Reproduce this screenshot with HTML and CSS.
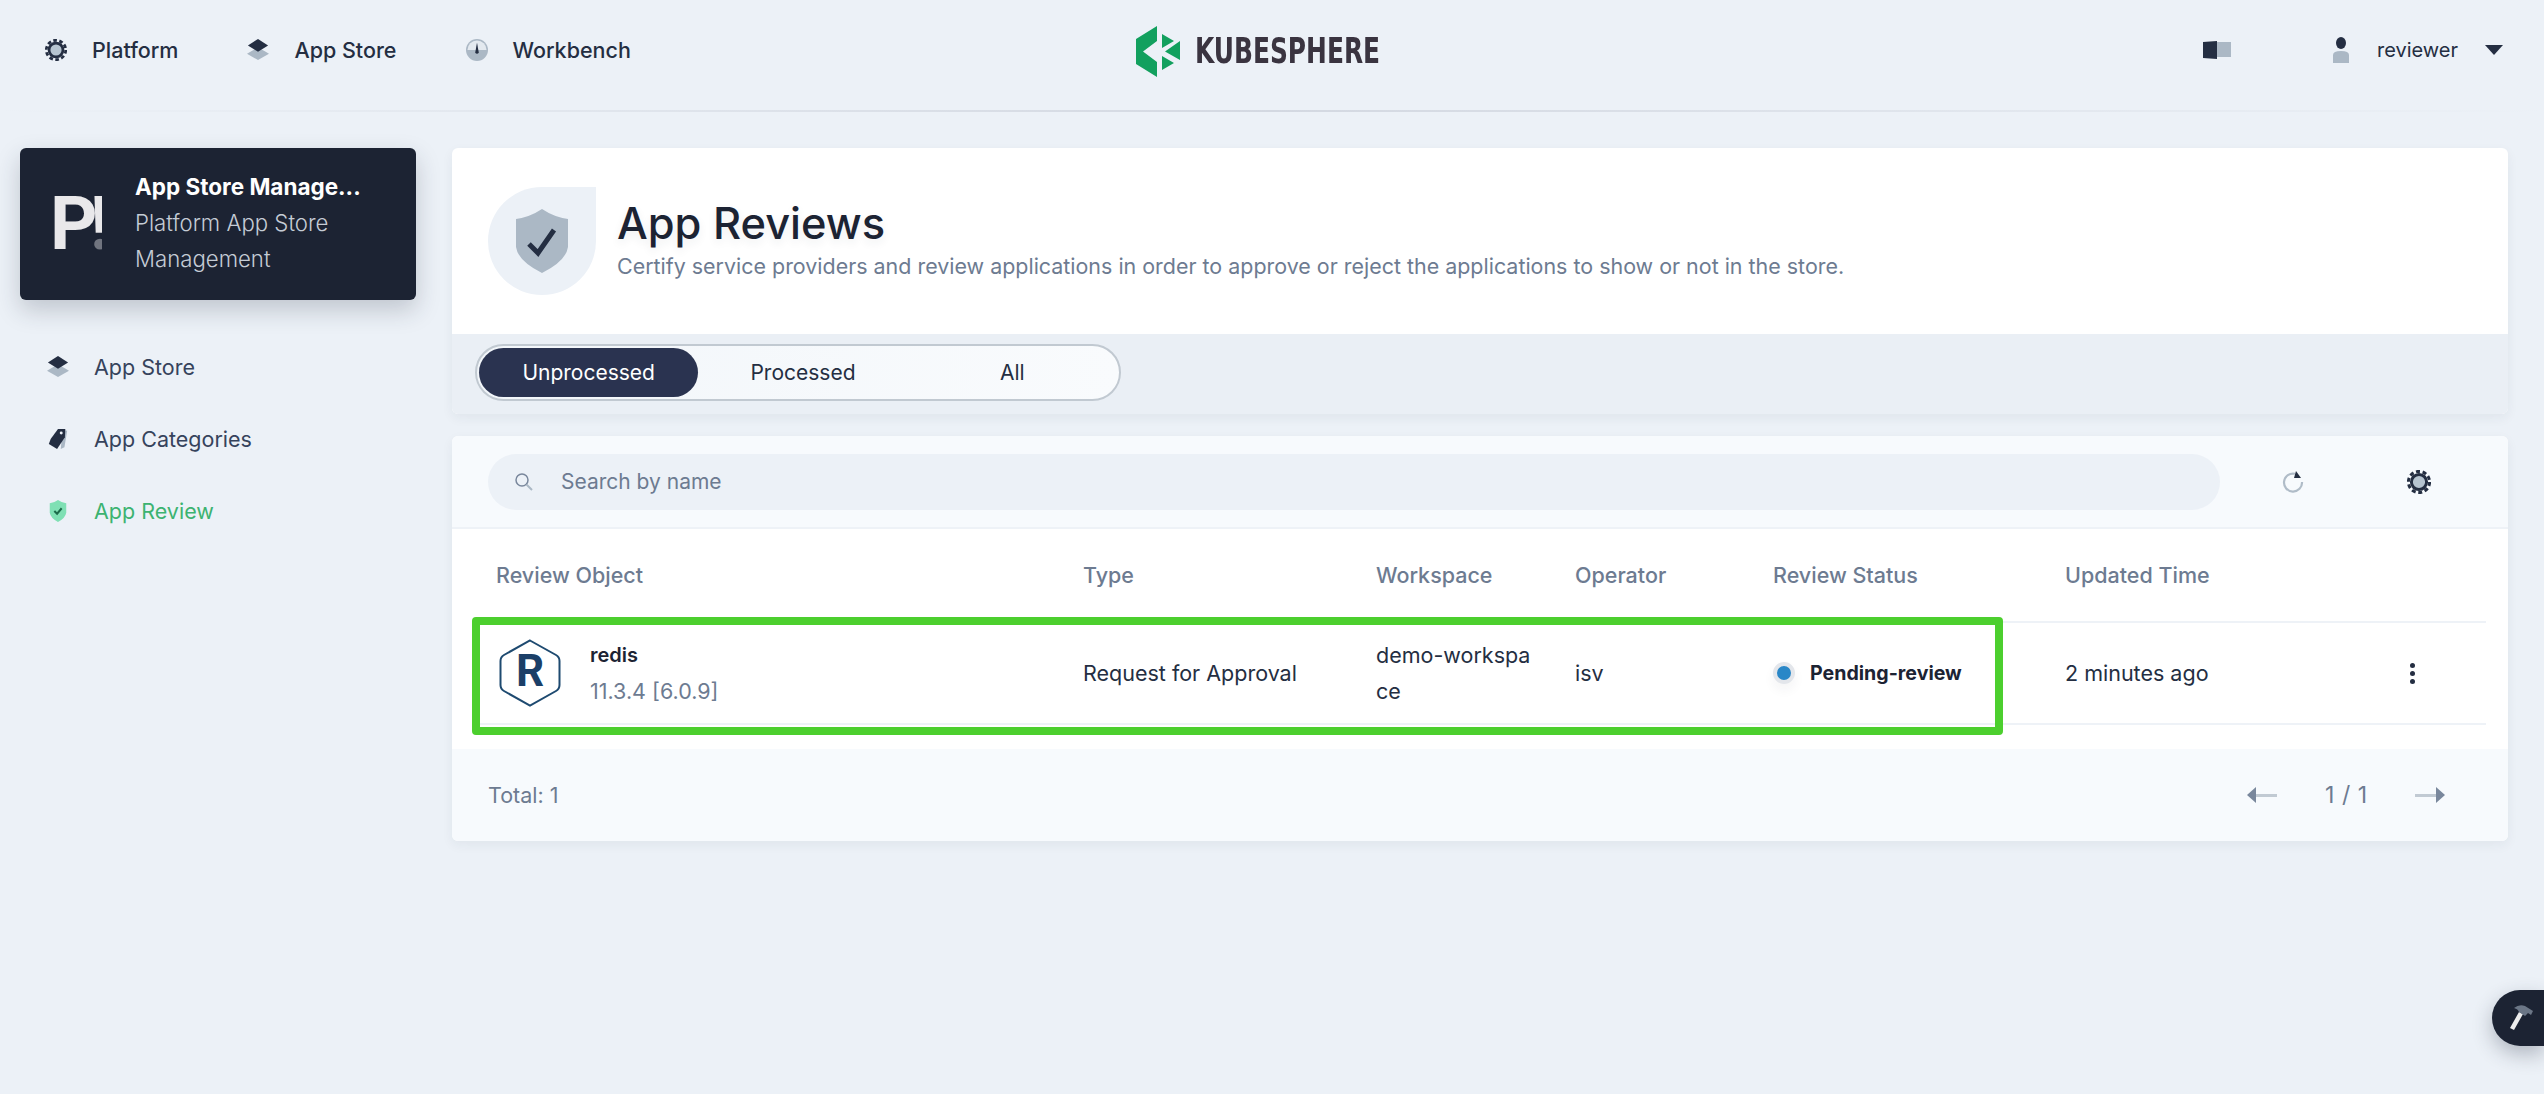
FILE: index.html
```html
<!DOCTYPE html>
<html lang="en">
<head>
<meta charset="UTF-8">
<title>App Reviews - KubeSphere</title>
<link rel="stylesheet" href="styles.css">
</head>
<body>

<header class="topbar">
    <nav class="topnav">
        <a class="topnav-item">
            <svg class="icon-22" viewBox="0 0 24 24"><circle cx="12" cy="12" r="10.6" fill="none" stroke="#242e42" stroke-width="3" stroke-dasharray="4 2.66"/><circle cx="12" cy="12" r="7.6" fill="#b6c4d0" stroke="#242e42" stroke-width="3"/></svg>
            <span>Platform</span>
        </a>
        <a class="topnav-item">
            <svg class="icon-22" viewBox="0 0 24 24"><path d="M12 11 24 18 12 25 0 18Z" transform="translate(0 -2)" fill="#abb8c5"/><path d="M12 0 23 7 12 14 1 7Z" fill="#242e42"/></svg>
            <span>App Store</span>
        </a>
        <a class="topnav-item">
            <svg class="icon-22" viewBox="0 0 24 24"><circle cx="12" cy="12" r="12" fill="#abb8c5"/><path d="M1.600 12a10.400 10.400 0 0 1 20.800 0Z" fill="#e3e9ef"/><path d="M12 4 14 15Q12 17 10 15Z" fill="#242e42"/></svg>
            <span>Workbench</span>
        </a>
    </nav>
    <div class="logo">
        <svg width="44" height="51" viewBox="0 0 44 51"><path d="M21 0V15L7 25.5 21 36V51L0 38V13Z" fill="#12a05e"/><path d="M26 8 38 15 26 22Z M44 15V34L29 25.500Z M26 30 38 37 26 44Z" fill="#12a05e"/></svg>
        <span class="logo-text">KUBESPHERE</span>
    </div>
    <div class="topbar-right">
        <svg class="book" width="28" height="18" viewBox="0 0 28 18"><path d="M14 1H28V16H14Z" fill="#abb8c5"/><path d="M0 1 14 0V18L0 17Z" fill="#242e42"/></svg>
        <div class="user">
            <svg width="18" height="26" viewBox="0 0 18 26"><ellipse cx="9" cy="6" rx="5" ry="6" fill="#242e42"/><path d="M1 26V18Q1 14 9 14T17 18V26Z" fill="#abb8c5"/></svg>
            <span>reviewer</span>
            <i class="caret"></i>
        </div>
    </div>
</header>

<div class="layout">
    <aside class="sidebar">
        <div class="side-card">
            <div class="side-logo">P<span class="bang">!</span></div>
            <div class="side-info">
                <div class="side-title">App Store Manage...</div>
                <div class="side-desc">Platform App Store Management</div>
            </div>
        </div>
        <ul class="side-menu">
            <li>
                <svg class="icon-22" viewBox="0 0 24 24"><path d="M12 11 24 18 12 25 0 18Z" transform="translate(0 -2)" fill="#abb8c5"/><path d="M12 0 23 7 12 14 1 7Z" fill="#242e42"/></svg>
                App Store
            </li>
            <li>
                <svg class="icon-22" viewBox="0 0 24 24"><path d="M17 2 22 3 19 21 15 23Z" fill="#abb8c5"/><path d="M12 1 20 1 19.500 10 11 23 2 17.500 4 12Z" fill="#242e42"/><circle cx="15.500" cy="5.500" r="1.600" fill="#edf1f7"/></svg>
                App Categories
            </li>
            <li class="active">
                <svg class="icon-22" viewBox="0 0 24 24"><path d="M12 0Q16 3 21 3.500V14Q20 20 12 24 4 20 3 14V3.500Q8 3 12 0Z" fill="#7fe0b4"/><path d="M8 12 11 15 16 9" fill="none" stroke="#1c6b4a" stroke-width="2.200"/></svg>
                App Review
            </li>
        </ul>
    </aside>

    <main class="content">
        <section class="banner">
            <div class="banner-head">
                <div class="banner-icon">
                    <svg width="52" height="64" viewBox="0 0 52 64"><path d="M26 0Q38 8 52 10V38Q50 52 26 64 2 52 0 38V10Q14 8 26 0Z" fill="#abb8c5"/><path d="M13 35 22 44 38 21" fill="none" stroke="#242e42" stroke-width="5"/></svg>
                </div>
                <div class="banner-text">
                    <h1>App Reviews</h1>
                    <p>Certify service providers and review applications in order to approve or reject the applications to show or not in the store.</p>
                </div>
            </div>
            <div class="banner-tabs">
                <div class="tabs">
                    <span class="tab tab-active">Unprocessed</span>
                    <span class="tab">Processed</span>
                    <span class="tab">All</span>
                </div>
            </div>
        </section>

        <section class="panel">
            <div class="toolbar">
                <div class="search">
                    <svg width="22" height="22" viewBox="0 0 22 22"><circle cx="9" cy="9" r="6" fill="none" stroke="#79879c" stroke-width="1.500"/><path d="M13.500 13.500 19 19" stroke="#abb8c5" stroke-width="2"/></svg>
                    <span>Search by name</span>
                </div>
                <svg class="refresh" width="22" height="22" viewBox="0 0 22 22"><path d="M13 2.800A9 9 0 1 0 20 11" fill="none" stroke="#b0bcc8" stroke-width="2.200"/><path d="M14 0 19 7 12 7Z" fill="#242e42"/></svg>
                <svg class="gear" width="24" height="24" viewBox="0 0 24 24"><circle cx="12" cy="12" r="10.6" fill="none" stroke="#242e42" stroke-width="3" stroke-dasharray="4 2.66"/><circle cx="12" cy="12" r="7.6" fill="#b6c4d0" stroke="#242e42" stroke-width="3"/></svg>
            </div>

            <div class="table-wrap">
                <table>
                    <colgroup>
                        <col class="col-object"><col class="col-type"><col class="col-space"><col class="col-op"><col class="col-status"><col class="col-time"><col>
                    </colgroup>
                    <thead>
                        <tr>
                            <th>Review Object</th>
                            <th>Type</th>
                            <th>Workspace</th>
                            <th>Operator</th>
                            <th>Review Status</th>
                            <th>Updated Time</th>
                            <th></th>
                        </tr>
                    </thead>
                    <tbody>
                        <tr>
                            <td>
                                <div class="app">
                                    <svg class="hex" width="62" height="68" viewBox="0 0 62 68"><path d="M31 1.500 57 16Q60.500 18 60.500 22V46Q60.500 50 57 52L31 66.500 5 52Q1.500 50 1.500 46V22Q1.500 18 5 16Z" fill="#fff" stroke="#1e4a70" stroke-width="2"/><text x="31" y="47" text-anchor="middle" class="hex-letter">R</text></svg>
                                    <div>
                                        <div class="app-name">redis</div>
                                        <div class="app-version">11.3.4 [6.0.9]</div>
                                    </div>
                                </div>
                            </td>
                            <td>Request for Approval</td>
                            <td><div class="space">demo-workspace</div></td>
                            <td>isv</td>
                            <td>
                                <div class="status"><i class="status-dot"></i>Pending-review</div>
                            </td>
                            <td>2 minutes ago</td>
                            <td class="cell-more"><span class="more"><i></i><i></i><i></i></span></td>
                        </tr>
                    </tbody>
                </table>
                <div class="highlight"></div>
            </div>

            <div class="panel-foot">
                <span>Total: 1</span>
                <div class="pager">
                    <svg width="30" height="16" viewBox="0 0 30 16"><path d="M8 7H30V10H8Z" fill="#c1cad3"/><path d="M9 0V16L0 8Z" fill="#79879c"/></svg>
                    <span class="pager-count">1 / 1</span>
                    <svg width="30" height="16" viewBox="0 0 30 16"><path d="M0 7H22V10H0Z" fill="#c1cad3"/><path d="M21 0V16L30 8Z" fill="#79879c"/></svg>
                </div>
            </div>
        </section>
    </main>
</div>

<div class="tool-btn">
    <svg width="24" height="26" viewBox="0 0 24 26"><path d="M10 7 14 9 5 25 1 23Z" fill="#eeeeee"/><path d="M5 3Q10 -1 16 1L24 6 22 10 19 8 16 11 10 7Q9 4 5 3Z" fill="#6b7686"/></svg>
</div>

</body>
</html>
```

FILE: styles.css
```css
* {
    box-sizing: border-box;
}
html, body {
    height: 100%;
}
body {
    margin: 0;
    background-color: #ecf1f7;
    font-family: 'Inter', 'Noto Sans', sans-serif;
    font-size: 21.5px;
    color: #242e42;
    overflow: hidden;
}
svg {
    display: block;
    flex-shrink: 0;
}
.icon-22 {
    width: 22px;
    height: 22px;
}

/* top bar */
.topbar {
    position: relative;
    height: 112px;
    display: flex;
    align-items: center;
    justify-content: space-between;
    padding: 0 41px 12px 45px;
}
.topbar::after {
    content: '';
    position: absolute;
    left: 0;
    right: 0;
    bottom: 0;
    height: 2px;
    background: linear-gradient(90deg, #ecf1f7, #d3d8e1 50%, #ecf1f7);
}
.topnav {
    display: flex;
    gap: 69px;
    width: 566px;
}
.topnav-item {
    display: flex;
    align-items: center;
    gap: 25px;
    flex-shrink: 0;
    font-weight: 500;
    white-space: nowrap;
}
.logo {
    display: flex;
    align-items: center;
    gap: 15px;
    margin-top: 2px;
}
.logo-text {
    width: 183px;
    font-family: 'DejaVu Sans', sans-serif;
    font-stretch: condensed;
    font-size: 35px;
    font-weight: 700;
    color: #3a3440;
    transform: scaleX(0.79);
    transform-origin: left center;
    white-space: nowrap;
}
.topbar-right {
    display: flex;
    align-items: center;
    justify-content: flex-end;
    width: 600px;
}
.book {
    margin-right: 101px;
}
.user {
    display: flex;
    align-items: center;
    font-size: 20px;
}
.user span {
    margin-left: 27px;
}
.caret {
    margin-left: 27px;
    border: 9px solid transparent;
    border-top: 10px solid #242e42;
    border-bottom: 0;
}

/* sidebar + content */
.layout {
    display: flex;
    padding: 36px 36px 0 20px;
    gap: 36px;
}
.sidebar {
    width: 396px;
    flex-shrink: 0;
}
.side-card {
    height: 152px;
    display: flex;
    align-items: center;
    padding-left: 30px;
    gap: 33px;
    background: #1c2333;
    border-radius: 6px;
    box-shadow: 0 10px 24px rgba(36, 46, 66, 0.22);
    color: #fff;
}
.side-logo {
    width: 52px;
    font-family: 'Roboto', sans-serif;
    font-size: 74px;
    font-weight: 700;
    line-height: 60px;
    letter-spacing: -8px;
    color: #e9e8ea;
    white-space: nowrap;
}
.bang {
    background: linear-gradient(#e9e8ea 66%, #70747f 66%);
    -webkit-background-clip: text;
    background-clip: text;
    color: transparent;
}
.side-title {
    font-size: 22.5px;
    font-weight: 700;
    line-height: 32px;
    white-space: nowrap;
}
.side-desc {
    width: 240px;
    margin-top: 2px;
    font-size: 22.2px;
    font-weight: 300;
    line-height: 36px;
    color: #c5ccd6;
}
.side-menu {
    list-style: none;
    margin: 31px 0 0;
    padding: 0;
}
.side-menu li {
    height: 72px;
    display: flex;
    align-items: center;
    gap: 25px;
    padding-left: 27px;
    color: #36435c;
}
.side-menu li.active {
    color: #3cb371;
}
.content {
    flex: 1;
    min-width: 0;
}

/* page banner */
.banner {
    background: #fff;
    border-radius: 6px;
    overflow: hidden;
    box-shadow: 0 4px 12px rgba(36, 46, 66, 0.06);
}
.banner-head {
    height: 186px;
    display: flex;
    align-items: center;
    gap: 21px;
    padding-left: 36px;
}
.banner-icon {
    width: 108px;
    height: 108px;
    display: flex;
    align-items: center;
    justify-content: center;
    background: #ecf1f7;
    border-radius: 50% 0 50% 50%;
}
.banner-text {
    margin-top: -5px;
}
.banner-head h1 {
    margin: 0;
    font-size: 43.4px;
    font-weight: 500;
    line-height: 52px;
    color: #1c2333;
    text-shadow: 0 4px 10px rgba(36, 46, 66, 0.08);
}
.banner-head p {
    margin: 2px 0 0;
    font-size: 21.45px;
    line-height: 30px;
    color: #6d7b91;
}
.banner-tabs {
    height: 80px;
    padding: 10px 23px 0;
    background: #eaeff5;
}
.tabs {
    width: 646px;
    height: 57px;
    display: flex;
    padding: 2px;
    background: linear-gradient(90deg, #f2f6fa, #f9fbfd);
    border: 2px solid #c1c9d1;
    border-radius: 29px;
}
.tab {
    width: 210px;
    display: flex;
    align-items: center;
    justify-content: center;
    font-size: 21px;
}
.tab-active {
    width: 220px;
    background: #2a3350;
    border-radius: 25px;
    color: #fff;
}

/* table panel */
.panel {
    margin-top: 22px;
    background: #fff;
    border-radius: 6px;
    overflow: hidden;
    box-shadow: 0 4px 12px rgba(36, 46, 66, 0.06);
}
.toolbar {
    height: 93px;
    display: flex;
    align-items: center;
    padding: 0 36px;
    background: #f7fafd;
    border-bottom: 2px solid #eef2f7;
}
.search {
    width: 1732px;
    height: 56px;
    display: flex;
    align-items: center;
    gap: 26px;
    padding-left: 25px;
    background: #ecf1f7;
    border-radius: 28px;
    font-size: 21px;
    color: #6d7b91;
}
.refresh {
    margin-left: 62px;
}
.gear {
    margin-left: 103px;
}
.table-wrap {
    position: relative;
    padding: 0 22px 24px;
}
table {
    width: 100%;
    table-layout: fixed;
    border-collapse: collapse;
}
.col-object { width: 587px; }
.col-type { width: 293px; }
.col-space { width: 199px; }
.col-op { width: 198px; }
.col-status { width: 292px; }
.col-time { width: 300px; }
th {
    height: 93px;
    padding: 0 22px;
    text-align: left;
    font-size: 21.5px;
    font-weight: 500;
    color: #6d7b91;
    border-bottom: 2px solid #eef2f7;
}
td {
    height: 102px;
    padding: 0 22px;
    border-bottom: 2px solid #eef2f7;
}
.app {
    display: flex;
    align-items: center;
    gap: 29px;
    margin-left: 3px;
}
.hex-letter {
    font-family: 'Roboto', sans-serif;
    font-size: 44px;
    font-weight: 700;
    fill: #1b3f68;
}
.app-name {
    font-size: 20px;
    font-weight: 600;
    line-height: 36px;
    color: #1c2333;
}
.app-version {
    line-height: 36px;
    color: #6d7b91;
}
.space {
    width: 160px;
    line-height: 36px;
    word-break: break-all;
}
.status {
    display: flex;
    align-items: center;
    gap: 15px;
    font-size: 19.6px;
    font-weight: 700;
    color: #1c2333;
}
.status-dot {
    width: 22px;
    height: 22px;
    display: flex;
    background: #2a87c7;
    border: 4px solid #e3e6eb;
    border-radius: 50%;
    box-shadow: 0 6px 12px rgba(36, 46, 66, 0.05);
}
.cell-more {
    padding: 0;
}
.more {
    display: flex;
    flex-direction: column;
    gap: 3px;
    align-items: center;
    width: 6px;
    margin-left: 66px;
}
.more i {
    width: 5px;
    height: 5px;
    background: #242e42;
    border-radius: 50%;
}
.highlight {
    position: absolute;
    left: 20px;
    top: 88px;
    width: 1531px;
    height: 118px;
    border: 8px solid #4ccf2e;
    border-radius: 4px;
}
.panel-foot {
    height: 92px;
    display: flex;
    align-items: center;
    justify-content: space-between;
    padding: 0 63px 0 36px;
    background: #f7fafd;
    color: #6d7b91;
}
.pager {
    display: flex;
    align-items: center;
    gap: 48px;
}
.pager-count {
    font-size: 23px;
    word-spacing: 1px;
}

/* floating tools button */
.tool-btn {
    position: fixed;
    right: 0;
    top: 990px;
    width: 52px;
    height: 56px;
    display: flex;
    align-items: center;
    padding-left: 17px;
    background: #1c2333;
    border-radius: 28px 0 0 28px;
    box-shadow: 0 8px 20px rgba(36, 46, 66, 0.3);
}
```
